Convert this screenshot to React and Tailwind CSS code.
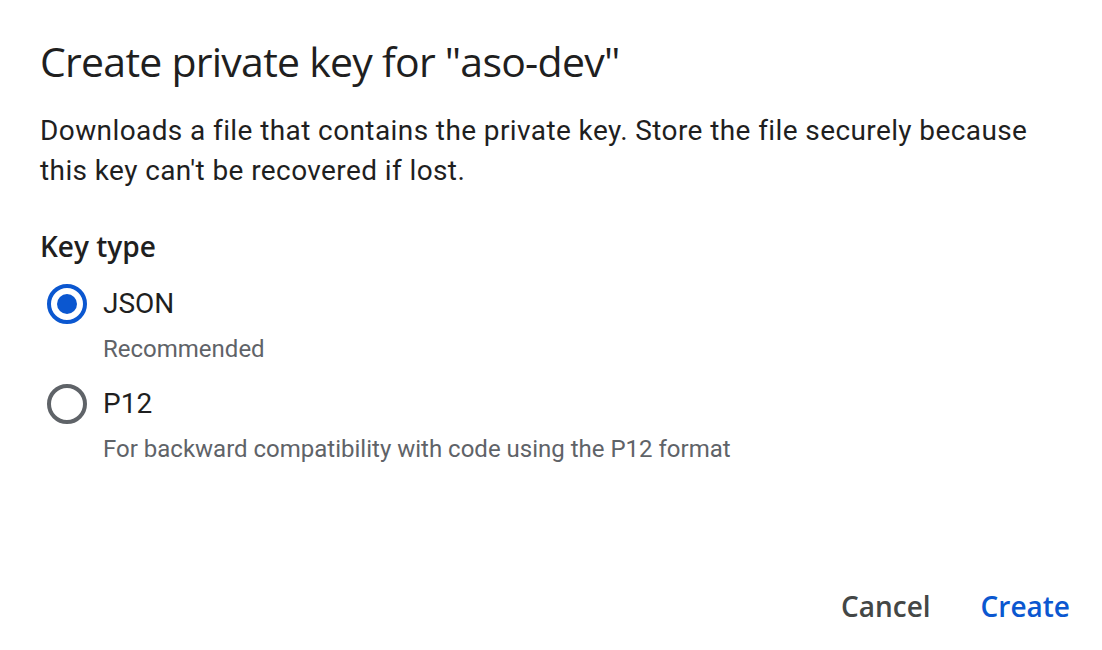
import React, { useState } from 'react';

const options = [
  { id: 'json', label: 'JSON', hint: 'Recommended' },
  { id: 'p12', label: 'P12', hint: 'For backward compatibility with code using the P12 format' },
];

const Radio = ({ checked }) => (
  <span
    className={`ml-[7px] flex h-[40px] w-[40px] shrink-0 items-center justify-center rounded-full border-[4px] ${
      checked ? 'border-[#0b57d0]' : 'border-[#5f6368]'
    }`}
  >
    {checked && <span className="h-[20px] w-[20px] rounded-full bg-[#0b57d0]" />}
  </span>
);

const App = () => {
  const [keyType, setKeyType] = useState('json');

  return (
    <div className="min-h-[650px] w-full bg-white pl-[40px] pt-[33px] text-[#1f1f1f]">
      <h1 className="font-['Open_Sans',sans-serif] text-[41px] font-normal leading-[56px] tracking-[-0.75px]">
        Create private key for "aso-dev"
      </h1>
      <p className="mt-[22px] max-w-[1010px] font-['Roboto',sans-serif] text-[28px] leading-[40px] tracking-[0.4px]">
        Downloads a file that contains the private key. Store the file securely because this key can't be recovered if lost.
      </p>

      <h2 className="mt-[35px] font-['Open_Sans',sans-serif] text-[28px] font-semibold leading-[40px]">Key type</h2>

      <div className="mt-[18px] flex flex-col">
        {options.map((o, i) => (
          <label key={o.id} className={`flex cursor-pointer flex-col ${i > 0 ? 'mt-[19px]' : ''}`} onClick={() => setKeyType(o.id)}>
            <span className="flex items-center gap-[16px]">
              <Radio checked={keyType === o.id} />
              <span className="font-['Roboto',sans-serif] text-[28px] leading-[40px]">{o.label}</span>
            </span>
            <span className="mt-[9px] pl-[63px] font-['Roboto',sans-serif] text-[24px] leading-[32px] text-[#5f6368]">
              {o.hint}
            </span>
          </label>
        ))}
      </div>

      <div className="mt-[121px] flex justify-end gap-[50px] pr-[32px] font-['Open_Sans',sans-serif] text-[28px] font-semibold leading-[40px]">
        <button className="text-[#444746]">Cancel</button>
        <button className="text-[#0b57d0]">Create</button>
      </div>
    </div>
  );
};

export default App;
